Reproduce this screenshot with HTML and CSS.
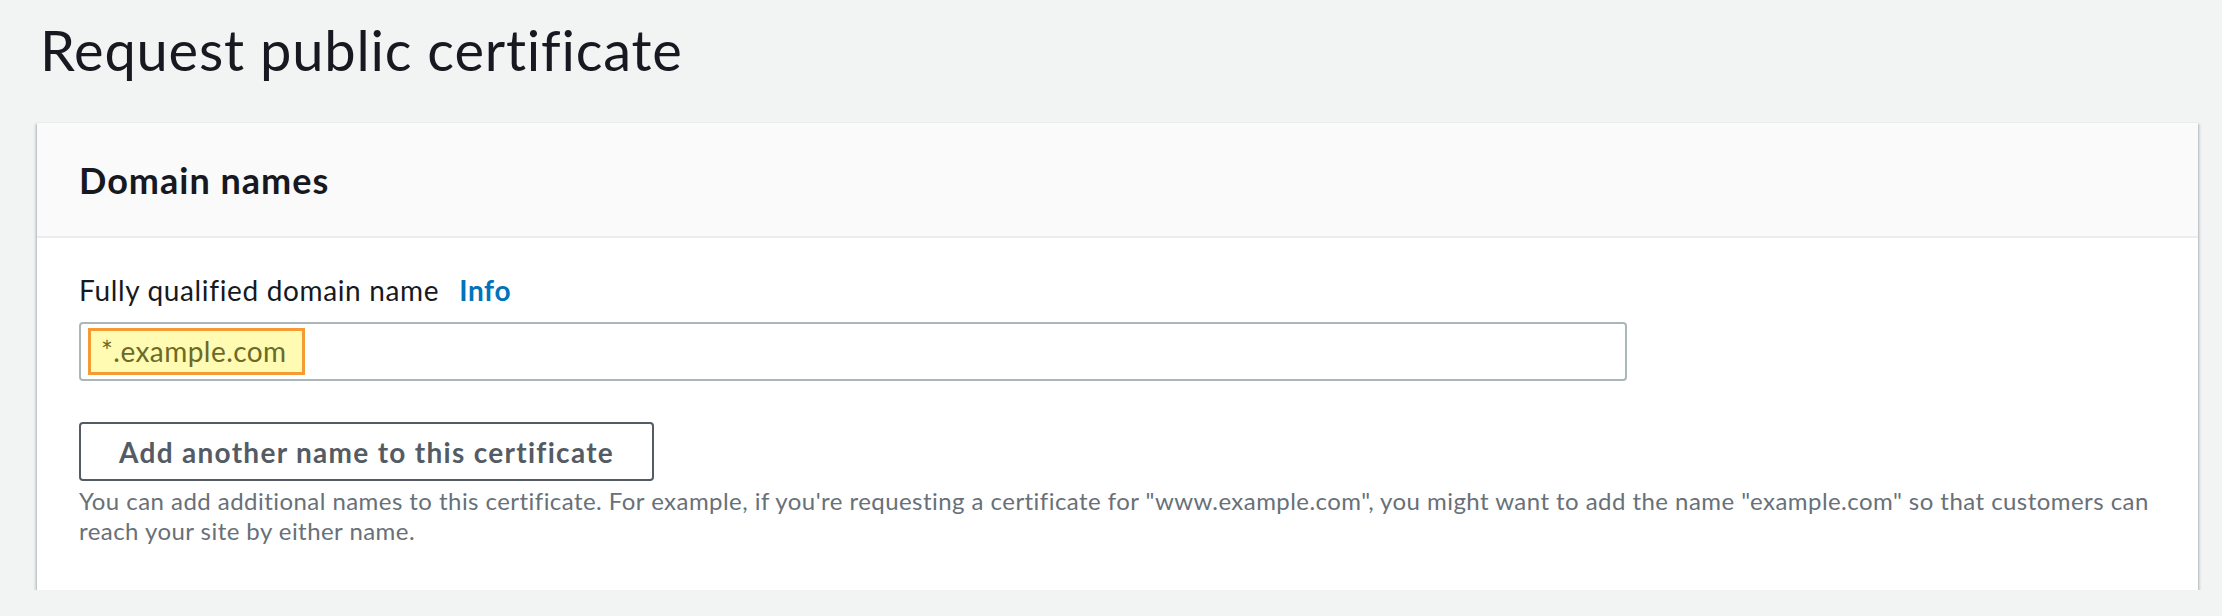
FILE: index.html
```html
<!DOCTYPE html>
<html lang="en">
<head>
  <meta charset="UTF-8">
  <meta name="viewport" content="width=device-width, initial-scale=1.0">
  <title>Request public certificate</title>
  <link rel="stylesheet" href="styles.css">
</head>
<body>
  <div class="page">
    <h1 class="title">Request public certificate</h1>
    <div class="card">
      <div class="card-head">
        <h2>Domain names</h2>
      </div>
      <div class="card-body">
        <div class="field-label">
          <label for="fqdn">Fully qualified domain name</label>
          <a href="#" class="info">Info</a>
        </div>
        <div class="input" id="fqdn">
          <span class="mark">*.example.com</span>
        </div>
        <button class="add-btn">Add another name to this certificate</button>
        <p class="hint">You can add additional names to this certificate. For example, if you're requesting a certificate for "www.example.com", you might want to add the name "example.com" so that customers can reach your site by either name.</p>
      </div>
    </div>
  </div>
</body>
</html>
```

FILE: styles.css
```css
body{
  margin:0;
  background:#f2f3f3;
  font-family:Lato, "Liberation Sans", sans-serif;
  color:#16191f;
}
.page{
  padding:0 24px 0 37px;
}
.title{
  margin:18px 0 40px 3px;
  font-size:56px;
  line-height:64px;
  font-weight:400;
  letter-spacing:0.8px;
}
.card{
  background:#fff;
  box-shadow:0 2px 2px 0 rgba(0,28,36,.3), 2px 2px 2px 0 rgba(0,28,36,.12), -2px 2px 2px 0 rgba(0,28,36,.12);
  border-top:1px solid #eaeded;
}
.card-head{
  background:#fafafa;
  border-bottom:2px solid #eaeded;
  padding:35px 42px 34px;
}
.card-head h2{
  margin:0;
  font-size:36px;
  line-height:44px;
  font-weight:700;
  letter-spacing:1px;
}
.card-body{
  padding:32px 24px 44px 42px;
}
.field-label{
  display:flex;
  align-items:baseline;
  gap:20px;
  font-size:28px;
  line-height:40px;
  letter-spacing:0.65px;
}
.info{
  color:#0073bb;
  font-weight:700;
  text-decoration:none;
}
.input{
  margin-top:12px;
  width:1548px;
  height:59px;
  box-sizing:border-box;
  border:2px solid #aab7b8;
  border-radius:4px;
  display:flex;
  align-items:center;
  padding-left:7px;
}
.mark{
  background:#fffbb3;
  border:3px solid #f59b35;
  color:#6b6a28;
  font-size:28px;
  line-height:41px;
  letter-spacing:0.45px;
  padding:0 15px 0 10px;
}
.add-btn{
  display:block;
  margin-top:41px;
  height:59px;
  padding:0 38px;
  background:#fff;
  border:2px solid #545b64;
  border-radius:4px;
  color:#545b64;
  font-family:inherit;
  font-size:28px;
  font-weight:700;
  letter-spacing:1.3px;
  cursor:pointer;
}
.hint{
  margin:5px 0 0;
  font-size:24px;
  line-height:30px;
  color:#687078;
  letter-spacing:0.45px;
}
```
